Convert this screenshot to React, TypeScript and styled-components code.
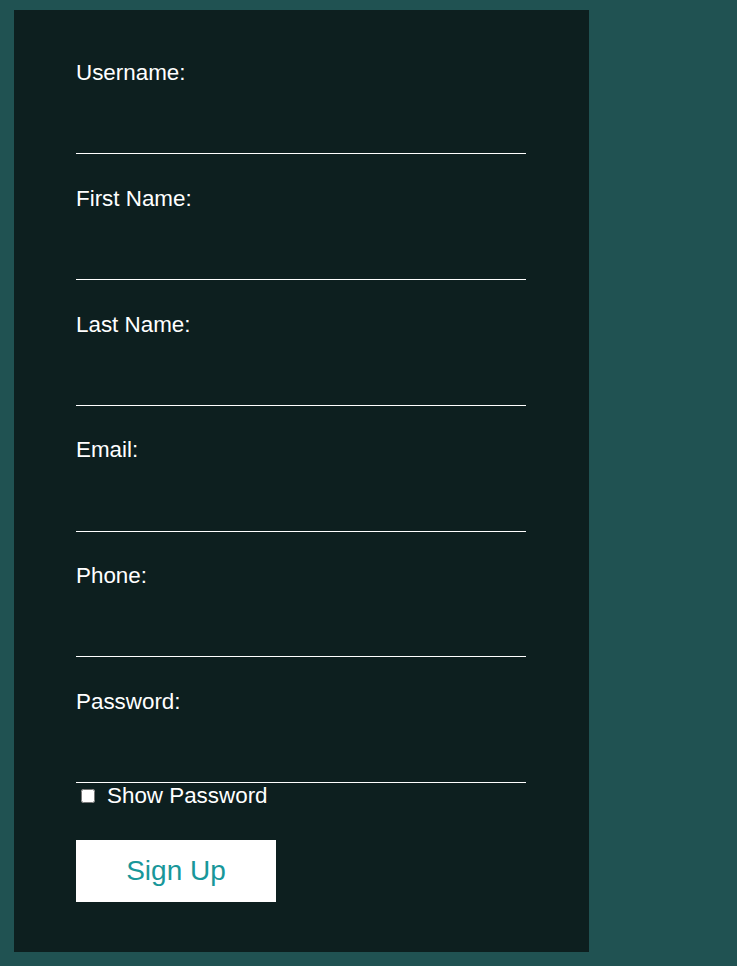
import React, { useState } from 'react';
import styled, { createGlobalStyle } from 'styled-components';

const GlobalStyle = createGlobalStyle`
  html, body {
    margin: 0;
    background: #205252;
    font-family: 'Liberation Sans', Arial, sans-serif;
  }
`;

const Page = styled.div`
  padding: 10px 14px 14px;
`;

const Panel = styled.form`
  width: 575px;
  box-sizing: border-box;
  background: #0d1f1f;
  padding: 50px 62px 50px;
`;

const Field = styled.div<{ last?: boolean }>`
  display: flex;
  flex-direction: column;
  width: 450px;
  margin-bottom: ${(props) => (props.last ? '0' : '31.62px')};
`;

const Label = styled.label`
  font-size: 22.4px;
  color: #ffffff;
`;

const Input = styled.input`
  box-sizing: border-box;
  height: 48.2px;
  margin-top: 20px;
  background: transparent;
  border: none;
  border-bottom: 1px solid #ffffff;
  color: #ffffff;
  font-size: 20px;
  font-family: inherit;
  outline: none;
  padding: 0;
`;

const CheckRow = styled.label`
  display: flex;
  align-items: center;
  font-size: 22.4px;
  color: #ffffff;
`;

const Check = styled.input`
  width: 14px;
  height: 14px;
  margin: 0 12px 0 5px;
`;

const Button = styled.button`
  display: block;
  margin-top: 31px;
  width: 200px;
  height: 62px;
  background: #ffffff;
  border: none;
  color: #18979a;
  font-family: inherit;
  font-size: 28px;
  cursor: pointer;
`;

const fields = [
  { name: 'username', label: 'Username:', type: 'text' },
  { name: 'firstName', label: 'First Name:', type: 'text' },
  { name: 'lastName', label: 'Last Name:', type: 'text' },
  { name: 'email', label: 'Email:', type: 'email' },
  { name: 'phone', label: 'Phone:', type: 'tel' },
  { name: 'password', label: 'Password:', type: 'password' },
];

const App = () => {
  const [showPassword, setShowPassword] = useState(false);

  return (
    <Page>
      <GlobalStyle />
      <Panel onSubmit={(e) => e.preventDefault()}>
        {fields.map((f, index) => (
          <Field key={f.name} last={index === fields.length - 1}>
            <Label htmlFor={f.name}>{f.label}</Label>
            <Input
              id={f.name}
              name={f.name}
              type={f.type === 'password' && showPassword ? 'text' : f.type}
            />
          </Field>
        ))}
        <CheckRow>
          <Check
            type="checkbox"
            checked={showPassword}
            onChange={() => setShowPassword(!showPassword)}
          />
          Show Password
        </CheckRow>
        <Button type="submit">Sign Up</Button>
      </Panel>
    </Page>
  );
};

export default App;
